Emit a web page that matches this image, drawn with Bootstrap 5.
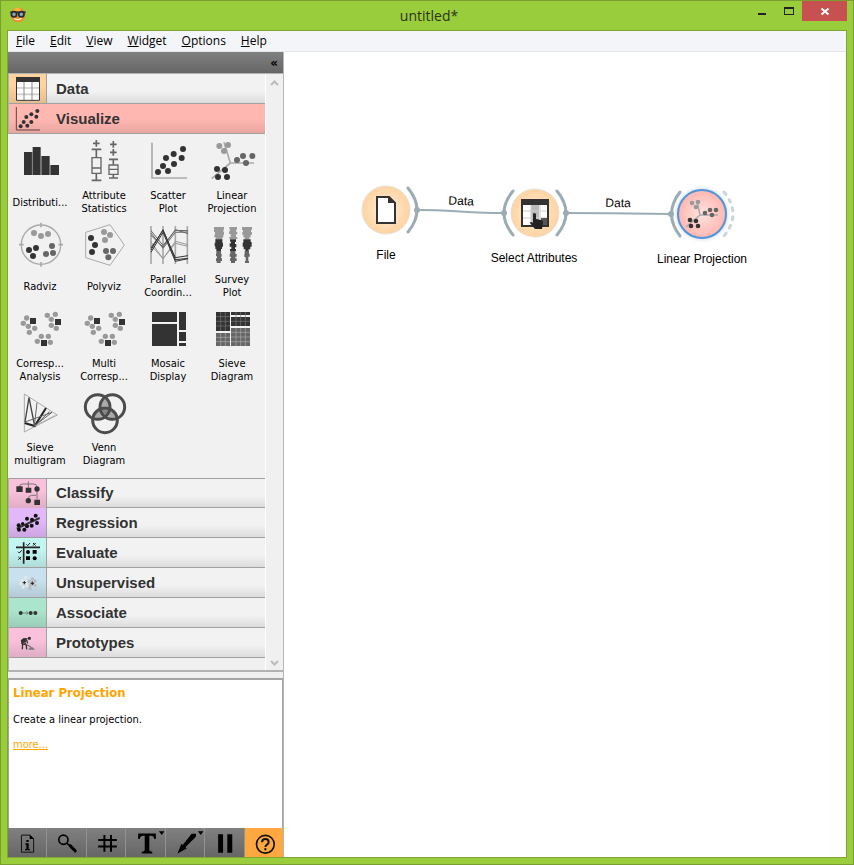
<!DOCTYPE html>
<html lang="en">
<head>
<meta charset="utf-8">
<meta name="viewport" content="width=device-width, initial-scale=1">
<title>untitled*</title>
<link href="https://cdn.jsdelivr.net/npm/bootstrap@5.3.0/dist/css/bootstrap.min.css" rel="stylesheet">
<style>
body{background:#9acd3c;color:#000;font:11px/13px "DejaVu Sans Condensed","Noto Sans",sans-serif}
button{font:inherit;color:inherit}
svg{display:block;flex:none}
.window{min-height:100vh;border:1px solid #7a9f30;padding:0 6px 6px}
.title-bar{height:29px}
.title-text{font:14px/30px "Open Sans",sans-serif;color:#2c3317}
.win-btn{border:0;background:none;padding:0}
.win-close{background:#c75050;width:45px;height:20px}
.app-frame{border:1px solid #7fa632;background:#fff}
.menu-bar{height:21px;background:#f4f5f8;border-bottom:1px solid #e4e6e9;gap:15px;padding-left:8px;font:12px/19px "Open Sans",sans-serif}
.menu-bar a{color:#000;text-decoration:none}
.side{width:276px;flex:none;border-right:1px solid #b4b6b8;background:#f0f0f0}
.side-head{height:21px;background:linear-gradient(#808080,#666);padding-right:5px;font:bold 12px/20px "DejaVu Sans",sans-serif}
.toolbox{border:1px solid #b0b2b4;border-width:1px 0 2px 1px}
.scroll-col{width:18px;padding:6px 0 4px;border-left:1px solid #fff}
.tool-tab{height:30px;border:0;border-bottom:1px solid #a0a0a0;padding:0;width:100%;background:linear-gradient(#f2f2f2 60%,#dcdcdc);font:bold 15px/30px "Liberation Sans",sans-serif;color:#333;text-align:left;gap:9px}
.tool-tab svg{width:38px;height:29px;border-right:1px solid #a0a0a0}
.tab-open{background:linear-gradient(#ffb7b1 50%,#e9a6a1)}
.tab-open svg{border-color:transparent}
.tab-below{border-top:1px solid #a0a0a0;line-height:28px}
.bg-data{background:linear-gradient(#ffd39f 40%,#e6bd8f)}
.bg-pink{background:linear-gradient(#fac1dc 40%,#e0adc5)}
.bg-violet{background:linear-gradient(#e3b8fb 40%,#cba5e1)}
.bg-cyan{background:linear-gradient(#c3f5f2 40%,#afdcd9)}
.bg-blue{background:linear-gradient(#c9e1ee 40%,#b4cad6)}
.bg-mint{background:linear-gradient(#ace5ce 40%,#9acdb9)}
.tool-grid{display:grid;grid-template-columns:repeat(4,64px);grid-auto-rows:84px;padding-bottom:8px;background:#f1f1f1;margin-left:-1px}
.tool{border:0;background:none;padding:3px 0 2px}
.tool svg{width:48px;height:48px;margin:0 auto 3px}
.tool span{height:28px;display:flex;align-items:center;justify-content:center;text-align:center}
.split{height:6px}
.info{height:150px;background:#fff;border:1px solid #a2a4a6;border-width:2px 1px 0;padding:5px 4px}
.info h1{font:bold 13px/16px "DejaVu Sans Condensed",sans-serif;color:#ffa500;margin:0 0 12px}
.info p{margin:0 0 12px}
.info a{color:#ffa500}
.tool-bar{height:29px;background:linear-gradient(#808080,#666)}
.tool-bar button{flex:1 1 0;min-width:0;border:0;border-right:1px solid #929292;background:none;padding:0}
.tool-bar button:last-child{background:#ffa840;border:0}
.tool-bar svg{width:100%;height:29px}
.canvas text{font:12px "Liberation Sans",sans-serif;text-anchor:middle;fill:#000}
.canvas{min-width:0}
</style>
<script src="https://cdn.jsdelivr.net/npm/bootstrap@5.3.0/dist/js/bootstrap.bundle.min.js"></script>
</head>
<body>
<div class="window d-flex flex-column">
<header class="title-bar position-relative d-flex align-items-start">
  <svg width="20" height="26" viewBox="21 3 60 78" aria-hidden="true"><circle cx="54" cy="45" r="22" fill="#f58a2c"/><circle cx="52" cy="36" r="13" fill="#fbb13f"/><path d="M42 55q12 9 24-2" fill="none" stroke="#fff3c8" stroke-width="4"/><path d="M31 34h46v6h-46z" fill="#333"/><circle cx="42" cy="43" r="8" fill="#8ba4b5" stroke="#252a30" stroke-width="5"/><circle cx="64" cy="43" r="8" fill="#8ba4b5" stroke="#252a30" stroke-width="5"/></svg>
  <div class="title-text flex-grow-1 text-center pe-3">untitled*</div>
  <div class="d-flex position-absolute top-0 end-0">
    <button class="win-btn" aria-label="Minimize"><svg width="26" height="20" viewBox="0 0 26 20"><path d="M8 12h8v2H8z" fill="#222"/></svg></button>
    <button class="win-btn" aria-label="Maximize"><svg width="26" height="20" viewBox="0 0 26 20"><path d="M8 6h10v8H8zM9 8v5h8V8z" fill-rule="evenodd" fill="#222"/></svg></button>
    <button class="win-btn win-close" aria-label="Close"><svg width="45" height="20" viewBox="0 0 45 20"><path d="M19.5 7.500l7 6m0-6l-7 6" stroke="#fff" stroke-width="2"/></svg></button>
  </div>
</header>
<div class="app-frame flex-grow-1 d-flex flex-column">
<nav class="menu-bar d-flex" aria-label="Main menu"><a href="#"><u>F</u>ile</a><a href="#"><u>E</u>dit</a><a href="#"><u>V</u>iew</a><a href="#"><u>W</u>idget</a><a href="#"><u>O</u>ptions</a><a href="#"><u>H</u>elp</a></nav>
<div class="d-flex flex-grow-1">
<aside class="side d-flex flex-column">
  <div class="side-head d-flex justify-content-end"><button class="win-btn" aria-label="Collapse">«</button></div>
  <div class="toolbox d-flex flex-grow-1">
    <div class="flex-grow-1">
      <button class="tool-tab d-flex"><svg class="bg-data" viewBox="27 222 111 87"><path d="M48 232h72v70H48z" fill="#fff"/><path d="M48 264h72M48 283h72" stroke="#ccc" stroke-width="5"/><path d="M72 244v58M96 244v58" stroke="#888" stroke-width="3"/><path d="M49.500 233h69v68h-69z" fill="none" stroke="#333" stroke-width="3"/><path d="M48 231h72v15H48z" fill="#333"/></svg>Data</button>
      <button class="tool-tab tab-open d-flex"><svg viewBox="27 312 111 87"><path d="M49 321v69h71" fill="none" stroke="#5f4543" stroke-width="3"/><g fill="#333"><circle cx="112" cy="333" r="6"/><circle cx="94" cy="343" r="6"/><circle cx="109" cy="350" r="6"/><circle cx="79" cy="351" r="6"/><circle cx="71" cy="366" r="6"/><circle cx="94" cy="366" r="6"/><circle cx="82" cy="377" r="6"/><circle cx="62" cy="379" r="6"/></g></svg>Visualize</button>
      <div class="tool-grid">
        <button class="tool"><svg viewBox="24 9 144 144"><path d="M48 54h24v69H48zM74 39h24v84H74zM100 66h25v57h-25zM127 93h26v30h-26z" fill="#333"/><path d="M73 54v69M99 66v57M126 93v30" stroke="#777" stroke-width="3"/></svg><span>Distributi...</span></button>
        <button class="tool"><svg viewBox="216 9 144 144"><g fill="none" stroke="#666" stroke-width="5"><path d="M265 18v20M255 28h20M251 46h29M265 46v26M251 139h29M265 119v20M316 21v20M306 31h20M316 45v20M306 55h20M303 76h27M316 76v16M303 132h27M316 121v12"/><path d="M252 71h27v47h-27zM252 102h27M303 93h27v28h-27zM303 106h27" stroke-width="4"/></g></svg><span>Attribute<br>Statistics</span></button>
        <button class="tool"><svg viewBox="408 9 144 144"><path d="M432 26v106h105" fill="none" stroke="#aaa" stroke-width="5"/><g fill="#333"><circle cx="525" cy="45" r="9"/><circle cx="497" cy="60" r="9"/><circle cx="521" cy="72" r="9"/><circle cx="474" cy="72" r="9"/><circle cx="465" cy="96" r="9"/><circle cx="498" cy="90" r="9"/><circle cx="480" cy="111" r="9"/><circle cx="450" cy="114" r="9"/></g></svg><span>Scatter<br>Plot</span></button>
        <button class="tool"><svg viewBox="600 9 144 144"><path d="M648 25l19 62h71M667 87l-56 47" fill="none" stroke="#aaa" stroke-width="5"/><g fill="#999"><circle cx="634" cy="36" r="9"/><circle cx="660" cy="33" r="9"/><circle cx="648" cy="51" r="9"/></g><g fill="#666"><circle cx="687" cy="78" r="9"/><circle cx="705" cy="66" r="9"/><circle cx="733" cy="66" r="9"/><circle cx="714" cy="87" r="9"/></g><g fill="#333"><circle cx="627" cy="105" r="9"/><circle cx="651" cy="108" r="9"/><circle cx="630" cy="129" r="9"/><circle cx="657" cy="129" r="9"/></g></svg><span>Linear<br>Projection</span></button>

        <button class="tool"><svg viewBox="24 9 144 144"><circle cx="99" cy="80" r="59" fill="none" stroke="#aaa" stroke-width="4"/><path d="M99 14v14M99 132v14M33 80h14M151 80h14" stroke="#aaa" stroke-width="5"/><g fill="#999"><circle cx="78" cy="45" r="9"/><circle cx="99" cy="54" r="9"/><circle cx="120" cy="48" r="9"/></g><g fill="#666"><circle cx="132" cy="84" r="9"/><circle cx="114" cy="108" r="9"/><circle cx="135" cy="105" r="9"/></g><g fill="#333"><circle cx="63" cy="96" r="9"/><circle cx="84" cy="90" r="9"/><circle cx="75" cy="114" r="9"/></g></svg><span>Radviz</span></button>
        <button class="tool"><svg viewBox="216 9 144 144"><path d="M306 20l43 61-43 61-73-23V43z" fill="none" stroke="#aaa" stroke-width="3"/><g fill="#999"><circle cx="288" cy="42" r="9"/><circle cx="306" cy="51" r="9"/><circle cx="291" cy="66" r="9"/></g><g fill="#666"><circle cx="294" cy="99" r="9"/><circle cx="315" cy="99" r="9"/><circle cx="301" cy="118" r="9"/></g><g fill="#333"><circle cx="249" cy="60" r="9"/><circle cx="261" cy="81" r="9"/><circle cx="252" cy="102" r="9"/></g></svg><span>Polyviz</span></button>
        <button class="tool"><svg viewBox="408 9 144 144"><path d="M429 24v114M465 24v114M502 24v114M538 24v114" stroke="#aaa" stroke-width="5"/><g fill="none" stroke="#999" stroke-width="3"><path d="M429 72l36 50 37-52 38 10M429 82l36 40 37-46 38 9"/></g><g fill="none" stroke="#666" stroke-width="3"><path d="M429 38l36 44 37-45 38 1M429 45l36 46 37-48 38-1M429 52l36 35 37-52 38 12"/></g><g fill="none" stroke="#333" stroke-width="3"><path d="M429 96l36-61 37 90 38-4M429 103l36-60 37 87 38-8M429 90l36-53 37 82 38-6"/></g></svg><span>Parallel<br>Coordin...</span></button>
        <button class="tool"><svg viewBox="600 9 144 144"><path d="M618 27h30v8h-2v6h2v9h-2v8h-3v7h-20v-7h-4v-8h2v-8h-3zM664 27h23v8h-3v6h4v8h-4v8h4v6h-24v-6h4v-9h-5v-8h3v-6h-2zM702 27h30v9h-3v6h3v8h-4v8h-4v6h-14v-6h-4v-8h-3v-8h2v-6h-3z" fill="#999"/><path d="M622 64h21v10h2v12h-3v7h-3v6h-14v-6h-3v-8h-2V74h2zM666 64h18v8h-3v6h4v10h-4v5h3v6h-18v-6h4v-7h-5V76h4v-5h-3zM706 64h22v8h3v14h-4v8h-5v5h-10v-5h-5v-8h-3V74h2z" fill="#333"/><path d="M625 99h14v9h2v8h-2v5h3v8h-4v6h-12v-6h-2v-8h3v-6h-3v-8h1zM667 99h15v9h4v8h-4v5h4v8h-5v6h-12v-6h-3v-8h3v-5h-4v-8h2zM710 99h13v8h2v9h-4v13h2v6h-12v-6h2v-12h-4v-9h1z" fill="#666"/></svg><span>Survey<br>Plot</span></button>

        <button class="tool"><svg viewBox="24 9 144 144"><g id="corr"><g fill="#999"><circle cx="56" cy="48" r="8"/><circle cx="46" cy="64" r="8"/><circle cx="61" cy="73" r="8"/><circle cx="80" cy="79" r="8"/><circle cx="64" cy="91" r="8"/><circle cx="118" cy="40" r="8"/><circle cx="142" cy="37" r="8"/><circle cx="130" cy="52" r="8"/><circle cx="130" cy="70" r="8"/><circle cx="145" cy="79" r="8"/><circle cx="100" cy="103" r="8"/><circle cx="121" cy="103" r="8"/><circle cx="88" cy="118" r="8"/><circle cx="127" cy="121" r="8"/></g><path d="M66 48h18v18H66zM141 51h18v18h-18zM99 114h18v18H99z" fill="#333"/></g></svg><span>Corresp...<br>Analysis</span></button>
        <button class="tool"><svg viewBox="24 9 144 144"><use href="#corr"/></svg><span>Multi<br>Corresp...</span></button>
        <button class="tool"><svg viewBox="408 9 144 144"><path d="M432 30h75v30h-75zM432 66h75v66h-75zM513 30h21v54h-21zM513 90h21v27h-21zM513 123h21v9h-21z" fill="#333"/></svg><span>Mosaic<br>Display</span></button>
        <button class="tool"><svg viewBox="600 9 144 144"><path d="M624 30h42v57h-42zM669 30h57v9h-57zM669 45h57v27h-57z" fill="#333"/><path d="M624 93h42v39h-42zM669 78h57v54h-57z" fill="#666"/><path d="M638 30v57M652 30v57M624 44h42M624 58h42M624 72h42M684 30v42M698 30v42M712 30v42M669 58h57" stroke="#777" stroke-width="2"/><path d="M638 93v39M652 93v39M624 106h42M624 119h42M684 78v54M698 78v54M712 78v54M669 91h57M669 105h57M669 119h57" stroke="#aaa" stroke-width="2"/></svg><span>Sieve<br>Diagram</span></button>

        <button class="tool"><svg viewBox="24 9 144 144"><path d="M49 24l99 63-99 51z" fill="none" stroke="#aaa" stroke-width="3"/><g fill="none" stroke="#444"><path d="M63 35l-12 73M63 35l17 85" stroke-width="4"/><path d="M50 111l30 9 34-54" stroke="#222" stroke-width="6"/><path d="M87 50l-8 70 53-41M51 108l81-29M80 120l44-43" stroke="#666" stroke-width="3"/><path d="M80 120l62-32" stroke="#999" stroke-width="2"/></g></svg><span>Sieve<br>multigram</span></button>
        <button class="tool"><svg viewBox="216 9 144 144"><path d="M291 34q16 12 17 30-18-5-34 0 1-18 17-30M255 96q4-18 19-28 1 20 14 32-17 8-33-4M328 96q-4-18-20-28-1 20-14 32 18 8 34-4" fill="#aaa"/><path d="M275 66q16-6 32 0-2 20-16 31-14-11-16-31" fill="#888"/><g fill="none" stroke="#4c4c4c" stroke-width="9"><circle cx="269" cy="63" r="37"/><circle cx="313" cy="63" r="37"/><circle cx="291" cy="103" r="37"/></g></svg><span>Venn<br>Diagram</span></button>
      </div>
      <button class="tool-tab tab-below d-flex"><svg class="bg-pink" viewBox="27 9 111 87"><path d="M58 34q0-10 9-10h34q10 0 10 10M85 16v22M111 44v26M85 70q0-12 10-12h14" fill="none" stroke="#777" stroke-width="3"/><path d="M49 31h19v17H49zM77 35h17v15H77zM103 71h17v16h-17z" fill="#333"/><circle cx="111" cy="39" r="8" fill="#333"/><circle cx="85" cy="74" r="8" fill="#333"/></svg>Classify</button>
      <button class="tool-tab d-flex"><svg class="bg-violet" viewBox="27 96 111 87"><path d="M50 158l69-32" stroke="#333" stroke-width="6"/><g fill="#111"><circle cx="107" cy="119" r="6"/><circle cx="81" cy="128" r="6"/><circle cx="96" cy="131" r="6"/><circle cx="111" cy="141" r="6"/><circle cx="56" cy="148" r="6"/><circle cx="68" cy="143" r="5"/><circle cx="81" cy="151" r="6"/><circle cx="95" cy="149" r="6"/><circle cx="57" cy="161" r="6"/><circle cx="73" cy="161" r="6"/></g></svg>Regression</button>
      <button class="tool-tab d-flex"><svg class="bg-cyan" viewBox="27 186 111 87"><path d="M48 214h72M71 199v64" stroke="#222" stroke-width="5"/><path d="M79 205l4 4 7-8M99 201l8 8m0-8l-8 8M54 227l4 4 7-8M55 243l8 8m0-8l-8 8" fill="none" stroke="#111" stroke-width="3"/><path d="M98 222h12v11H98zM78 241h12v11H78z"/><circle cx="84" cy="228" r="6"/><circle cx="104" cy="247" r="6"/></svg>Evaluate</button>
      <button class="tool-tab d-flex"><svg class="bg-blue" viewBox="27 276 111 87"><g fill="#e5e8ea"><circle cx="66" cy="313" r="5"/><circle cx="77" cy="305" r="5"/><circle cx="63" cy="323" r="5"/><circle cx="70" cy="333" r="5"/><circle cx="82" cy="329" r="5"/><circle cx="75" cy="319" r="7"/></g><g fill="#b7bcc0"><circle cx="97" cy="309" r="5"/><circle cx="88" cy="316" r="5"/><circle cx="105" cy="315" r="5"/><circle cx="90" cy="329" r="5"/><circle cx="105" cy="328" r="5"/><circle cx="90" cy="338" r="5"/><circle cx="97" cy="322" r="7"/></g><path d="M73 315v10M68 320h10M97 317v10M92 322h10" stroke="#222" stroke-width="3"/></svg>Unsupervised</button>
      <button class="tool-tab d-flex"><svg class="bg-mint" viewBox="27 366 111 87"><path d="M62 411h22M79 406l6 5-6 5" fill="none" stroke="#6b8c80" stroke-width="3"/><g fill="#333"><circle cx="62" cy="411" r="6"/><circle cx="92" cy="411" r="6"/><circle cx="106" cy="411" r="6"/></g></svg>Associate</button>
      <button class="tool-tab d-flex"><svg class="bg-pink" viewBox="27 456 111 87"><circle cx="88" cy="487" r="5" fill="#333"/><path d="M82 487l-11-1-9 7 5 10 11-6z" fill="#333"/><path d="M68 500l-1 20M74 499l5 9 1 12M65 494l1 9 12 3M80 492l3 10" fill="none" stroke="#333" stroke-width="4"/><path d="M70 500l24 14" stroke="#555" stroke-width="3"/><path d="M84 521l7-7h7l7 7z" fill="#777"/></svg>Prototypes</button>
    </div>
    <div class="scroll-col d-flex flex-column justify-content-between align-items-center"><svg width="9" height="6" viewBox="0 0 9 6"><path d="M1 5l3.500-3.500L8 5" fill="none" stroke="#bbb" stroke-width="2"/></svg><svg width="9" height="6" viewBox="0 0 9 6"><path d="M1 1l3.500 3.500L8 1" fill="none" stroke="#bbb" stroke-width="2"/></svg></div>
  </div>
  <div class="split"></div>
  <section class="info"><h1>Linear Projection</h1><p>Create a linear projection.</p><a href="#">more...</a></section>
  <div class="tool-bar d-flex" role="toolbar" aria-label="Canvas tools">
    <button aria-label="Info"><svg viewBox="24 504 117 87"><path d="M65 525h26l11 11v41H65z" fill="none" stroke="#111" stroke-width="3"/><path d="M90 524v13h13z"/><path d="M80 540h7v6h-7zM77 550h10v17h4v4H76v-4h4v-13h-3z"/></svg></button>
    <button aria-label="Zoom"><svg viewBox="141 504 117 87"><circle cx="191" cy="539" r="14" fill="none" stroke="#000" stroke-width="5"/><path d="M202 550l6 6" stroke="#000" stroke-width="5"/><path d="M211 557l16 16" stroke="#000" stroke-width="9" stroke-linecap="round"/></svg></button>
    <button aria-label="Grid"><svg viewBox="260 504 117 87"><path d="M294 540h57M294 560h57M313 525v51M333 525v51" stroke="#000" stroke-width="6"/></svg></button>
    <button aria-label="Text"><svg viewBox="378 504 117 87"><path d="M415 520h54v17h-5q-1-10-11-10h-4v44q0 4 9 5v5h-32v-5q9-1 9-5v-44h-4q-10 0-11 10h-5z"/><path d="M478 513h17l-8 12z"/></svg></button>
    <button aria-label="Arrow"><svg viewBox="497 504 117 87"><path d="M575 521h13v9l-32 32 4 4-28 15 12-30 4 4z"/><path d="M594 513h17l-8 12z"/></svg></button>
    <button aria-label="Pause"><svg viewBox="615 504 117 87"><path d="M655 522h15v57h-15zM683 522h15v57h-15z"/></svg></button>
    <button aria-label="Help"><svg viewBox="735 504 117 87"><circle cx="797" cy="553" r="27" fill="none" stroke="#111" stroke-width="5"/><path d="M787 547q0-10 10-10t10 9q0 5-5 8t-5 7" fill="none" stroke="#111" stroke-width="6"/><path d="M794 565h6v6h-6z"/></svg></button>
  </div>
</aside>
<main class="canvas flex-grow-1">
<svg width="100%" height="240" role="img" aria-label="Workflow">
<defs><radialGradient id="orange"><stop offset="0" stop-color="#ffefdf"/><stop offset="1" stop-color="#ffd39f"/></radialGradient><radialGradient id="red"><stop offset="0" stop-color="#ffe3e0"/><stop offset="1" stop-color="#ffb7b1"/></radialGradient><filter id="glow" x="-30%" y="-30%" width="160%" height="160%"><feGaussianBlur stdDeviation="2"/></filter></defs>
<g transform="translate(-284 -52)">
<g fill="none" stroke="#9cacb4" stroke-width="2"><path d="M417 210C450 210 470 213 504 213M566 213C600 213 640 214 671 214"/><g stroke-width="3" stroke-linecap="round"><path d="M408 188Q426 210 408 232M513 191Q495 213 513 235M557 191Q575 213 557 235M680 192Q663 214 680 236"/><path d="M724 192Q742 214 724 236" stroke="#ccd5d9" stroke-dasharray="3 6"/></g></g>
<g fill="#9cacb4"><circle cx="417" cy="210" r="3"/><circle cx="504" cy="213" r="3"/><circle cx="566" cy="213" r="3"/><circle cx="671" cy="214" r="3"/></g>
<g fill="url(#orange)" stroke="#e6dfd8"><circle cx="386" cy="210" r="24"/><circle cx="535" cy="213" r="24"/></g>
<circle cx="702" cy="214" r="25" fill="#8ab0dd" opacity=".6" filter="url(#glow)"/>
<circle cx="702" cy="214" r="24" fill="url(#red)" stroke="#5593d8" stroke-width="2"/>
<path d="M377 197h12l6 6v20h-18z" fill="#fff" stroke="#333" stroke-width="2"/><path d="M388 196v7h8z" fill="#333"/>
<path d="M522 200h26v26h-26z" fill="#fff"/><path d="M531 205h8v20h-8z" fill="#bbb"/><path d="M522 211h26M522 218h26" stroke="#ccc"/><path d="M531 204v22M540 204v22" stroke="#ccc"/><path d="M541 218h7v8h-7z" fill="#555"/><path d="M522 200h26v26h-26z" fill="none" stroke="#333" stroke-width="2"/><path d="M521 199h28v6h-28z" fill="#333"/>
<path d="M533 214q1-2 3 0v5l5 1q2 0 2 3l-1 6h-7l-5-6q0-2 3 0z" fill="#222"/>
<g transform="translate(688 199)"><path d="M9 2l3 14h18M12 16L-2 28" fill="none" stroke="#aaa" stroke-width="1.500"/><g fill="#999"><circle cx="4" cy="4" r="2.300"/><circle cx="10" cy="3" r="2.300"/><circle cx="8" cy="8" r="2.300"/></g><g fill="#666"><circle cx="17" cy="14" r="2.300"/><circle cx="22" cy="11" r="2.300"/><circle cx="28" cy="11" r="2.300"/><circle cx="24" cy="16" r="2.300"/></g><g fill="#333"><circle cx="2" cy="21" r="2.300"/><circle cx="8" cy="22" r="2.300"/><circle cx="3" cy="27" r="2.300"/><circle cx="10" cy="27" r="2.300"/></g></g>
<text x="386" y="259">File</text><text x="534" y="262">Select Attributes</text><text x="702" y="263">Linear Projection</text>
<text x="461" y="205" transform="rotate(2 461 205)">Data</text><text x="618" y="207" transform="rotate(1 618 207)">Data</text>
</g></svg>
</main>
</div>
</div>
</div>
</body>
</html>
